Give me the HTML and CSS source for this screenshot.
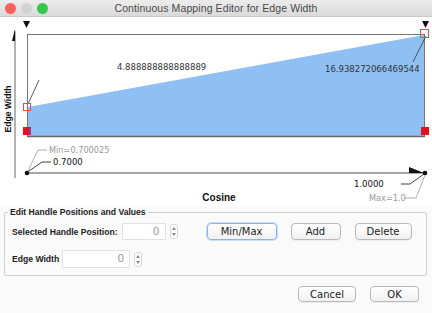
FILE: index.html
```html
<!DOCTYPE html>
<html lang="en">
<head>
    <meta charset="UTF-8">
    <title>Continuous Mapping Editor for Edge Width</title>
    <link rel="stylesheet" href="styles.css">
</head>
<body>
    <div class="window">
        <div class="titlebar">
            <div class="lights">
                <span class="light red"></span>
                <span class="light idle"></span>
                <span class="light green"></span>
            </div>
            <div class="title">Continuous Mapping Editor for Edge Width</div>
        </div>

        <!-- Mapping chart -->
        <svg class="chart" width="432" height="190" viewBox="0 17 432 190">
            <polygon points="23,21 30,21 26.5,28" fill="#111"/>
            <polygon points="422,21 429,21 425.5,28" fill="#111"/>

            <rect x="27.5" y="34.5" width="397" height="102" fill="#fff" stroke="#777"/>
            <polygon points="28,107 424,35 424,136 28,136" fill="#8ec0f3"/>
            <line x1="27" y1="136.5" x2="425" y2="136.5" stroke="#666" stroke-width="1.5"/>

            <line x1="28" y1="104" x2="39" y2="80" stroke="#333" stroke-width="0.8"/>
            <rect x="23.5" y="103.5" width="7" height="7" fill="none" stroke="#e8484f"/>
            <rect x="23" y="127" width="8" height="8" fill="#e5101c"/>
            <rect x="29" y="128" width="2" height="7" fill="#9a3a8a"/>

            <line x1="426" y1="36" x2="413" y2="62" stroke="#333" stroke-width="0.8"/>
            <rect x="420.5" y="29.5" width="8" height="8" fill="none" stroke="#e8484f"/>
            <rect x="421" y="127" width="8" height="8" fill="#e5101c"/>

            <text class="val" x="117" y="70">4.888888888888889</text>
            <text class="val" x="325" y="72">16.938272066469544</text>

            <!-- y axis -->
            <line x1="15" y1="31" x2="15" y2="178" stroke="#666"/>
            <polygon points="15,29 15,41 12,41" fill="#111"/>
            <text class="axis" x="0" y="0" transform="translate(11,109) rotate(-90)" text-anchor="middle">Edge Width</text>

            <!-- x axis -->
            <line x1="27" y1="173" x2="424" y2="173" stroke="#888" stroke-width="1.5"/>
            <polygon points="409,167 424,173 409,173" fill="#111"/>
            <circle cx="27" cy="173" r="2.3" fill="#111"/>
            <circle cx="425" cy="173" r="2.3" fill="#111"/>

            <polyline points="28,171 38,150 47,150" fill="none" stroke="#999" stroke-width="0.8"/>
            <polyline points="29,171 42,162 51,162" fill="none" stroke="#111" stroke-width="0.8"/>
            <text class="minmax" x="49" y="153">Min=0.700025</text>
            <text class="bound" x="53" y="165">0.7000</text>

            <polyline points="424,174 410,184 401,184" fill="none" stroke="#111" stroke-width="0.8"/>
            <polyline points="425,175 416,198 404,198" fill="none" stroke="#999" stroke-width="0.8"/>
            <text class="bound" x="354" y="187">1.0000</text>
            <text class="minmax" x="369" y="201">Max=1.0</text>

            <text class="axis x" x="219" y="201" text-anchor="middle">Cosine</text>
        </svg>

        <fieldset class="handles">
            <legend>Edit Handle Positions and Values</legend>
            <div class="row">
                <label class="label">Selected Handle Position:</label>
                <div class="field pos">0</div>
                <div class="spin">
                    <svg width="8" height="15" viewBox="0 0 8 15">
                        <polygon points="4,3 6,6 2,6" fill="#888"/>
                        <polygon points="2,9 6,9 4,12" fill="#888"/>
                    </svg>
                </div>
                <div class="actions">
                    <button class="btn focus">Min/Max</button>
                    <button class="btn add">Add</button>
                    <button class="btn del">Delete</button>
                </div>
            </div>
            <div class="row second">
                <label class="label">Edge Width</label>
                <div class="field width">0</div>
                <div class="spin">
                    <svg width="8" height="15" viewBox="0 0 8 15">
                        <polygon points="4,3 6,6 2,6" fill="#888"/>
                        <polygon points="2,9 6,9 4,12" fill="#888"/>
                    </svg>
                </div>
            </div>
        </fieldset>

        <div class="footer">
            <button class="btn cancel">Cancel</button>
            <button class="btn ok">OK</button>
        </div>
    </div>
</body>
</html>
```

FILE: styles.css
```css
* {
    margin: 0;
    padding: 0;
    box-sizing: border-box;
}

body {
    width: 432px;
    height: 313px;
    overflow: hidden;
    background-color: #fafafa;
    font-family: "Liberation Sans", Arial, sans-serif;
    color: #222;
}

.window {
    display: flex;
    flex-direction: column;
}

.titlebar {
    height: 17px;
    display: grid;
    grid-template-columns: 1fr auto 1fr;
    align-items: center;
    background: linear-gradient(#ececec, #dadada);
    border-bottom: 1px solid #c8c8c8;
}

.lights {
    display: flex;
    gap: 5px;
    padding-left: 5px;
}

.light {
    width: 11px;
    height: 11px;
    border-radius: 50%;
}

.light.red {
    background-color: #fc605c;
}

.light.idle {
    background-color: #d2d2d2;
}

.light.green {
    background-color: #34c84a;
}

.title {
    font-size: 10.5px;
    color: #4a4a4a;
    letter-spacing: 0.1px;
}

.chart {
    display: block;
    background-color: #fff;
}

.chart text {
    font-family: "DejaVu Sans", sans-serif;
}

.chart .val {
    font-size: 8.5px;
    fill: #333;
}

.chart .axis {
    font-family: "Liberation Sans", Arial, sans-serif;
    font-weight: bold;
    font-size: 8.6px;
    fill: #111;
}

.chart .axis.x {
    font-size: 10px;
}

.chart .minmax {
    font-size: 8.2px;
    fill: #999;
}

.chart .bound {
    font-size: 8.5px;
    fill: #111;
}

.handles {
    margin: 0 5px 0 4px;
    padding: 6px 4px 7px 3px;
    border: 1px solid #cfcfcf;
    border-radius: 2px;
}

.handles legend {
    padding: 0 2px;
    font-size: 8.6px;
    line-height: 10px;
    font-weight: bold;
    color: #222;
}

.row {
    display: flex;
    align-items: center;
    height: 17px;
    padding-left: 4px;
}

.row.second {
    margin-top: 10px;
    height: 18px;
}

.label {
    font-size: 8.6px;
    font-weight: bold;
    color: #222;
    margin-right: 4px;
}

.field {
    height: 100%;
    background-color: #fff;
    border: 1px solid #e2e2e2;
    text-align: right;
    font-family: "DejaVu Sans", sans-serif;
    font-size: 10.5px;
    line-height: 15px;
    color: #9a9a9a;
    padding-right: 5px;
}

.field.pos {
    width: 44px;
}

.field.width {
    width: 68px;
    margin-left: -1px;
}

.spin {
    width: 8px;
    height: 15px;
    margin-left: 4px;
    border: 1px solid #d6d6d6;
    border-radius: 3px;
    background-color: #fff;
    display: flex;
}

.spin svg {
    margin: -1px;
}

.actions {
    display: flex;
    gap: 14px;
    margin-left: 29px;
}

.btn {
    height: 17px;
    border: 1px solid #b9b9b9;
    border-radius: 4px;
    background: linear-gradient(#fff, #f1f1f1);
    font-family: "DejaVu Sans", sans-serif;
    font-size: 10px;
    color: #222;
    box-shadow: 0 1px 0 rgba(0, 0, 0, 0.05);
}

.btn.focus {
    width: 70px;
    border-color: #8ab4ec;
    box-shadow: 0 0 0 1px #c9ddf7;
}

.btn.add {
    width: 50px;
}

.btn.del {
    width: 57px;
}

.footer {
    display: flex;
    justify-content: flex-end;
    gap: 14px;
    padding: 10px 13px 0 0;
}

.btn.cancel {
    width: 58px;
    height: 16px;
}

.btn.ok {
    width: 49px;
    height: 16px;
}
```
